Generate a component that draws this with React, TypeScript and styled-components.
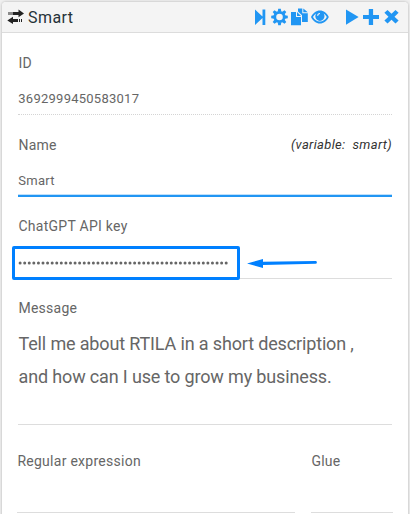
import React from "react";
import styled, { createGlobalStyle, css } from "styled-components";

const GlobalStyle = createGlobalStyle`
  * { box-sizing: border-box; }
  body { margin: 0; background: #f0f0f0; font-family: Roboto, sans-serif; overflow: hidden; }
`;

const Page = styled.div`
  height: 514px;
  padding: 2px 2px 0;
  overflow: hidden;
`;

const Card = styled.main`
  height: 530px;
  background: #fff;
  border-radius: 4px 4px 0 0;
  box-shadow: 0 0 3px rgba(0, 0, 0, 0.28);
`;

const Header = styled.header`
  display: flex;
  align-items: center;
  justify-content: space-between;
  height: 31px;
  padding: 0 9px 0 5px;
  background: #f4f4f4;
  border-bottom: 1px solid #dcdcdc;
  border-radius: 4px 4px 0 0;
`;

const Brand = styled.div`
  display: flex;
  align-items: center;
  gap: 4px;
`;

const Title = styled.h1`
  margin: 2px 0 0;
  font-size: 16px;
  font-weight: 400;
  line-height: 20px;
  letter-spacing: 0.45px;
  color: #263238;
`;

const Actions = styled.div`
  display: flex;
  align-items: center;
  color: #2196f3;
`;

const IconButton = styled.button<{ $width: number; $gap?: number }>`
  display: flex;
  width: ${(p) => p.$width}px;
  height: 20px;
  margin: 0 0 0 ${(p) => p.$gap ?? 0}px;
  padding: 0;
  border: 0;
  background: none;
  color: inherit;
`;

const Glyph = styled.svg`
  display: block;
  flex: none;
  fill: currentColor;
`;

const Body = styled.form`
  display: flex;
  flex-direction: column;
  padding: 0 16px;
`;

const Field = styled.div`
  display: flex;
  flex-direction: column;
  padding-top: 20px;
`;

const LabelRow = styled.div<{ $lift?: number }>`
  display: flex;
  justify-content: space-between;
  height: 20px;
  margin-top: -${(p) => p.$lift ?? 0}px;
  margin-bottom: ${(p) => p.$lift ?? 0}px;
  line-height: 20px;
`;

const Label = styled.label`
  padding-left: 0.4px;
  font-size: 14px;
  letter-spacing: 0.27px;
  color: #666;
`;

const VariableHint = styled.em`
  font-size: 13px;
  letter-spacing: 0.32px;
  white-space: pre;
  color: #333;
`;

const lines = {
  dotted: css`border-bottom: 1px dotted #d4d4d4;`,
  solid: css`border-bottom: 1px solid #ddd;`,
  focused: css`
    border-bottom: 2px solid #2196f3;
    box-shadow: inset 0 -1px 0 #bfe0fb;
  `,
};

const Value = styled.div<{ $line: keyof typeof lines }>`
  position: relative;
  height: 37px;
  margin-top: 5px;
  padding-top: 5px;
  padding-left: 0.3px;
  font-size: 13px;
  line-height: 32px;
  letter-spacing: 0.25px;
  color: #666;
  ${(p) => lines[p.$line]}
`;

const Highlight = styled.div`
  position: absolute;
  left: -6px;
  top: 4px;
  width: 228px;
  height: 34px;
  border: 3px solid #0080ff;
  border-radius: 2px;
`;

const Pointer = styled(Glyph)`
  position: absolute;
  left: 228px;
  top: 13px;
  color: #0080ff;
`;

const Secret = styled.div`
  display: flex;
  align-items: center;
  height: 31px;
`;

const Message = styled.p`
  height: 106px;
  margin: 0;
  padding: 8px 0 0 0.5px;
  border-bottom: 1px solid #ddd;
  font-size: 18px;
  line-height: 33px;
  letter-spacing: -0.15px;
  color: #666;
  white-space: pre-line;
`;

const SplitRow = styled.div`
  display: grid;
  grid-template-columns: 278px 82px;
  column-gap: 16px;
  margin: 0 -1px;
  padding-top: 26px;
`;

const EmptyValue = styled.div`
  height: 42px;
  border-bottom: 1px solid #ddd;
`;

const SECRET_LENGTH = 46;

const gearTeeth = [0, 45, 90, 135, 180, 225, 270, 315];

export default function App() {
  return (
    <>
      <GlobalStyle />
      <Page>
        <Card>
          <Header>
            <Brand>
              <Glyph width="17" height="16" viewBox="0 0 17 16" color="#222">
                <path d="M5.500 3h6V.6L17 4.400l-5.500 3.800V6h-6zM3.500 3h1v3h-1zM1.500 3h1v3h-1zM11 10H6V7.700L.3 11.400 6 15v-2.100h5zM12 10h1v2.900h-1zM14 10h1v2.900h-1z" />
              </Glyph>
              <Title>Smart</Title>
            </Brand>
            <Actions>
              <IconButton type="button" aria-label="Step" $width={11}>
                <Glyph width="11" height="20" viewBox="0 0 11 20">
                  <path d="M0 2.500l7.500 7V2.500h2.800v15.400H7.500v-7L0 17.900z" />
                </Glyph>
              </IconButton>
              <IconButton type="button" aria-label="Settings" $width={17} $gap={5}>
                <Glyph width="17" height="20" viewBox="0 0 17 20">
                  <circle cx="8.500" cy="10" r="4.700" fill="none" stroke="currentColor" strokeWidth="2.800" />
                  {gearTeeth.map((a) => (
                    <path key={a} d="M6.700 4.800L7.200 1.700h2.600l.5 3.100z" transform={`rotate(${a} 8.500 10)`} />
                  ))}
                </Glyph>
              </IconButton>
              <IconButton type="button" aria-label="Duplicate" $width={18} $gap={3}>
                <Glyph width="18" height="20" viewBox="0 0 18 20">
                  <path d="M0 5h5v5h5v8.200H0zM6 5l4 4H6zM7 1.500h4.300v4.700h5.500V15H11V8.200L7 4.600zM12.300 1.500l4.500 3.800h-4.500z" />
                </Glyph>
              </IconButton>
              <IconButton type="button" aria-label="Preview" $width={18} $gap={2}>
                <Glyph width="18" height="20" viewBox="0 0 18 20">
                  <path fillRule="evenodd" d="M0 10C2 6 5.200 3.500 8.900 3.500S16 6 17.800 10c-1.800 4-5.200 6.500-8.900 6.500S2 14 0 10zM2 10.100c1.500 2.900 4 4.500 6.900 4.500s5.400-1.600 6.900-4.500c-.9-2-1.900-2.900-3.100-3.700.6 1 .8 1.900.8 2.900a4.600 4.600 0 0 1-9.200 0c0-1 .2-1.900.8-2.900C3.900 7.200 2.800 8.200 2 10.100zM6 8.800c.2-1.700 1.200-2.800 3-2.900v1.200c-1 .1-1.600.7-1.700 1.700z" />
                </Glyph>
              </IconButton>
              <IconButton type="button" aria-label="Run" $width={13} $gap={17}>
                <Glyph width="13" height="20" viewBox="0 0 13 20">
                  <path d="M0 2.500L12.600 10 0 17.700z" />
                </Glyph>
              </IconButton>
              <IconButton type="button" aria-label="Add" $width={16} $gap={4}>
                <Glyph width="16" height="20" viewBox="0 0 16 20">
                  <path d="M5.800 2h4.300v5.900H16v4.200h-5.900V18H5.800v-5.900H0V7.900h5.800z" />
                </Glyph>
              </IconButton>
              <IconButton type="button" aria-label="Remove" $width={15} $gap={5}>
                <Glyph width="15" height="20" viewBox="0 0 15 20">
                  <path d="M3.500 3l4 3.800 4-3.800 3.100 2.800L10.500 9.700l4.100 3.800-3.100 3-4-3.800-4 3.800-3.100-3 4.100-3.800L.4 5.800z" />
                </Glyph>
              </IconButton>
            </Actions>
          </Header>
          <Body>
            <Field>
              <LabelRow><Label>ID</Label></LabelRow>
              <Value $line="dotted">3692999450583017</Value>
            </Field>
            <Field>
              <LabelRow>
                <Label>Name</Label>
                <VariableHint>{"(variable:  smart)"}</VariableHint>
              </LabelRow>
              <Value $line="focused">Smart</Value>
            </Field>
            <Field>
              <LabelRow $lift={1}><Label>ChatGPT API key</Label></LabelRow>
              <Value $line="solid">
                <Secret>
                  <Glyph width="212" height="4" viewBox="0 0 212 4" color="#666">
                    {Array.from({ length: SECRET_LENGTH }, (_, i) => (
                      <circle key={i} cx={2.1 + i * 4.58} cy="2" r="1.5" />
                    ))}
                  </Glyph>
                </Secret>
                <Highlight />
                <Pointer width="74" height="16" viewBox="0 0 74 16">
                  <path d="M1 8.500L17 4v2.800L69.500 6a1.300 1.300 0 0 1 0 2.800L17 10v3z" />
                </Pointer>
              </Value>
            </Field>
            <Field>
              <LabelRow $lift={1}><Label>Message</Label></LabelRow>
              <Message>{"Tell me about RTILA in a short description ,\nand how can I use to grow my business."}</Message>
            </Field>
            <SplitRow>
              <div>
                <LabelRow><Label>Regular expression</Label></LabelRow>
                <EmptyValue />
              </div>
              <div>
                <LabelRow><Label>Glue</Label></LabelRow>
                <EmptyValue />
              </div>
            </SplitRow>
          </Body>
        </Card>
      </Page>
    </>
  );
}
